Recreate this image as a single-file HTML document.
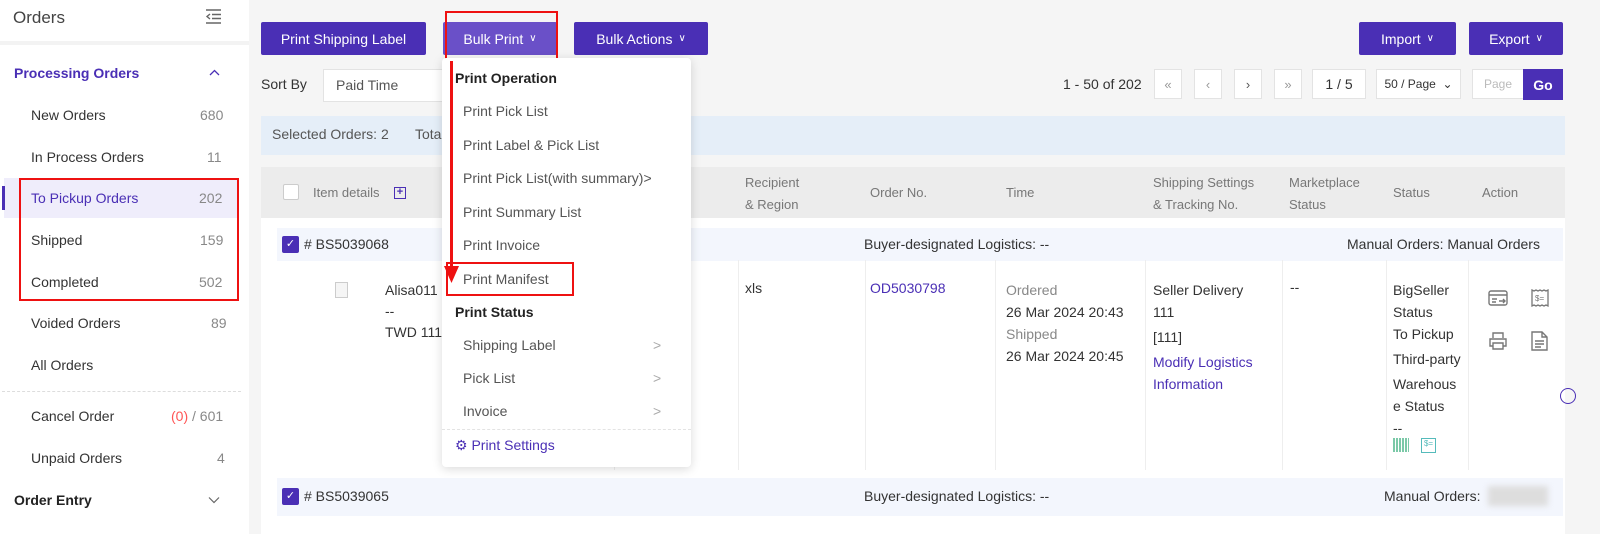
<!DOCTYPE html>
<html><head><meta charset="utf-8"><style>
*{margin:0;padding:0;box-sizing:border-box}
body{width:1600px;height:534px;overflow:hidden;background:#f5f5f5;font-family:"Liberation Sans",sans-serif;font-size:14px;color:#333;position:relative}
.a{position:absolute;white-space:nowrap}
.btn{position:absolute;height:33px;background:#4a2fb5;color:#fff;font-size:14px;display:flex;align-items:center;justify-content:center;border-radius:2px}
.pg{position:absolute;top:69px;height:30px;background:#fff;border:1px solid #e3e3e3;color:#999;display:flex;align-items:center;justify-content:center;font-size:13px}
.sb{color:#333;font-size:14px}
.n{color:#888;font-size:14px}
.mi{position:absolute;left:463px;color:#555;font-size:14px}
.vl{position:absolute;width:1px;background:#eee;top:260px;height:210px}
.hd{color:#777;font-size:13px;line-height:22px}
.chk{position:absolute;width:17px;height:17px;background:#4a2fb5;border-radius:2px;color:#fff;font-size:11px;text-align:center;line-height:17px}
</style></head><body>
<div class="a" style="left:0;top:0;width:249px;height:534px;background:#fff"></div>
<div class="a" style="left:0;top:41px;width:249px;height:4px;background:#f3f3f3"></div>
<div class="a" style="left:13px;top:8px;font-size:17px;color:#444">Orders</div>
<svg class="a" style="left:205px;top:9px" width="17" height="15" viewBox="0 0 17 15" fill="none" stroke="#666" stroke-width="1.4"><path d="M1 1h15M7 5.5h9M7 9.5h9M1 14h15M5 5l-3 2.5 3 2.5"/></svg>
<div class="a" style="left:14px;top:65px;color:#4a2fb5;font-size:14px;font-weight:bold">Processing Orders</div>
<svg class="a" style="left:209px;top:69px" width="11" height="8"><path d="M1 6l4.5-4.5L10 6" stroke="#4a2fb5" stroke-width="1.3" fill="none"/></svg>
<div class="a" style="left:4px;top:178px;width:234px;height:40px;background:#efedfb"></div>
<div class="a" style="left:2px;top:186px;width:3px;height:24px;background:#4a2fb5"></div>
<div class="a sb" style="left:31px;top:107px">New Orders</div><div class="a n" style="left:200px;top:107px">680</div>
<div class="a sb" style="left:31px;top:149px">In Process Orders</div><div class="a n" style="left:207px;top:149px">11</div>
<div class="a sb" style="left:31px;top:190px;color:#4a2fb5">To Pickup Orders</div><div class="a n" style="left:199px;top:190px">202</div>
<div class="a sb" style="left:31px;top:232px">Shipped</div><div class="a n" style="left:200px;top:232px">159</div>
<div class="a sb" style="left:31px;top:274px">Completed</div><div class="a n" style="left:199px;top:274px">502</div>
<div class="a sb" style="left:31px;top:315px">Voided Orders</div><div class="a n" style="left:211px;top:315px">89</div>
<div class="a sb" style="left:31px;top:357px">All Orders</div>
<div class="a" style="left:2px;top:391px;width:239px;border-top:1px dashed #ddd"></div>
<div class="a sb" style="left:31px;top:408px">Cancel Order</div><div class="a n" style="left:171px;top:408px"><span style="color:#f55">(0)</span> / 601</div>
<div class="a sb" style="left:31px;top:450px">Unpaid Orders</div><div class="a n" style="left:217px;top:450px">4</div>
<div class="a" style="left:14px;top:492px;font-weight:bold;color:#222">Order Entry</div>
<svg class="a" style="left:208px;top:496px" width="12" height="8"><path d="M1 1.5l5 5 5-5" stroke="#666" stroke-width="1.2" fill="none"/></svg>
<div class="a" style="left:19px;top:178px;width:220px;height:123px;border:2px solid #e11"></div>

<div class="btn" style="left:261px;top:22px;width:165px">Print Shipping Label</div>
<div class="btn" style="left:443px;top:22px;width:114px;background:#6a50c8">Bulk Print <span style="font-size:10px;margin-left:6px">&#8744;</span></div>
<div class="btn" style="left:574px;top:22px;width:134px">Bulk Actions <span style="font-size:10px;margin-left:6px">&#8744;</span></div>
<div class="btn" style="left:1359px;top:22px;width:97px">Import <span style="font-size:10px;margin-left:6px">&#8744;</span></div>
<div class="btn" style="left:1469px;top:22px;width:94px">Export <span style="font-size:10px;margin-left:6px">&#8744;</span></div>
<div class="a" style="left:445px;top:11px;width:113px;height:50px;border:2px solid #e11"></div>

<div class="a" style="left:261px;top:76px">Sort By</div>
<div class="a" style="left:323px;top:69px;width:127px;height:33px;background:#fff;border:1px solid #e3e3e3"></div>
<div class="a" style="left:336px;top:77px;color:#555">Paid Time</div>
<div class="a" style="left:1063px;top:76px">1 - 50 of 202</div>
<div class="pg" style="left:1154px;width:28px">&laquo;</div>
<div class="pg" style="left:1194px;width:28px">&lsaquo;</div>
<div class="pg" style="left:1234px;width:28px;color:#555">&rsaquo;</div>
<div class="pg" style="left:1274px;width:28px">&raquo;</div>
<div class="pg" style="left:1312px;width:54px;color:#333;font-size:14px">1 / 5</div>
<div class="pg" style="left:1376px;width:85px;color:#333;font-size:12px">50 / Page &nbsp;&#8964;</div>
<div class="pg" style="left:1472px;width:52px;color:#bbb;font-size:12px">Page</div>
<div class="a" style="left:1523px;top:69px;width:40px;height:31px;background:#4a2fb5;color:#fff;font-weight:bold;display:flex;align-items:center;justify-content:center">Go</div>

<div class="a" style="left:261px;top:116px;width:1304px;height:39px;background:#e5eef8"></div>
<div class="a" style="left:272px;top:126px;color:#555">Selected Orders: 2</div>
<div class="a" style="left:415px;top:126px;color:#555">Total</div>

<div class="a" style="left:261px;top:167px;width:1304px;height:367px;background:#fff"></div>
<div class="a" style="left:261px;top:167px;width:1304px;height:51px;background:#ececec"></div>
<div class="a" style="left:283px;top:184px;width:16px;height:16px;border:1px solid #ccc;background:#fff;border-radius:2px"></div>
<div class="a hd" style="left:313px;top:182px">Item details</div>
<div class="a" style="left:394px;top:187px;width:12px;height:12px;border:1.5px solid #4a2fb5;color:#4a2fb5;font-size:11px;line-height:9px;text-align:center;font-weight:bold">+</div>
<div class="a hd" style="left:745px;top:172px">Recipient<br>&amp; Region</div>
<div class="a hd" style="left:870px;top:182px">Order No.</div>
<div class="a hd" style="left:1006px;top:182px">Time</div>
<div class="a hd" style="left:1153px;top:172px">Shipping Settings<br>&amp; Tracking No.</div>
<div class="a hd" style="left:1289px;top:172px">Marketplace<br>Status</div>
<div class="a hd" style="left:1393px;top:182px">Status</div>
<div class="a hd" style="left:1482px;top:182px">Action</div>

<div class="a" style="left:277px;top:228px;width:1286px;height:33px;background:#f3f6fd"></div>
<div class="chk" style="left:282px;top:236px">&#10003;</div>
<div class="a" style="left:304px;top:236px">#&nbsp;BS5039068</div>
<div class="a" style="left:864px;top:236px">Buyer-designated Logistics: --</div>
<div class="a" style="left:1347px;top:236px">Manual Orders: Manual Orders</div>

<div class="vl" style="left:614px"></div><div class="vl" style="left:738px"></div><div class="vl" style="left:865px"></div><div class="vl" style="left:995px"></div><div class="vl" style="left:1145px"></div><div class="vl" style="left:1282px"></div><div class="vl" style="left:1386px"></div><div class="vl" style="left:1468px"></div>

<div class="a" style="left:335px;top:282px;width:13px;height:16px;border:1px solid #ccc;background:#f5f5f5"></div>
<div class="a" style="left:385px;top:280px;line-height:21px">Alisa011<br>--<br>TWD 111</div>
<div class="a" style="left:745px;top:280px">xls</div>
<div class="a" style="left:870px;top:280px;color:#4a2fb5">OD5030798</div>
<div class="a" style="left:1006px;top:279px;line-height:22px"><span style="color:#888">Ordered</span><br>26 Mar 2024 20:43<br><span style="color:#888">Shipped</span><br>26 Mar 2024 20:45</div>
<div class="a" style="left:1153px;top:279px;line-height:22px">Seller Delivery<br>111<br><span style="line-height:28px">[111]</span><br><span style="color:#4a2fb5">Modify Logistics<br>Information</span></div>
<div class="a" style="left:1290px;top:279px">--</div>
<div class="a" style="left:1393px;top:279px;line-height:22px">BigSeller<br>Status<br>To Pickup<br><span style="line-height:28px">Third-party</span><br>Warehous<br>e Status<br>--</div>
<div class="a" style="left:1393px;top:438px;width:16px;height:14px;background:repeating-linear-gradient(90deg,#7bc9a8 0 2px,#fff 2px 3px)"></div>
<div class="a" style="left:1421px;top:438px;width:15px;height:15px;border:1px solid #5bb;font-size:8px;color:#5bb;text-align:center">$=</div>
<svg class="a" style="left:1488px;top:289px" width="20" height="18" fill="none" stroke="#777" stroke-width="1.4"><rect x="1" y="2" width="18" height="14" rx="2"/><path d="M1 6h18M4 10h5M4 13h4M11 12h6M15 10l2 2-2 2"/></svg>
<svg class="a" style="left:1530px;top:288px" width="20" height="20" fill="none" stroke="#777" stroke-width="1.3"><path d="M2 2l2 1 2-1 2 1 2-1 2 1 2-1 2 1 2-1v16l-2-1-2 1-2-1-2 1-2-1-2 1-2-1-2 1z"/><text x="5" y="13" font-size="8" fill="#777" stroke="none">$=</text></svg>
<svg class="a" style="left:1488px;top:331px" width="20" height="20" fill="none" stroke="#777" stroke-width="1.4"><path d="M5 7V2h10v5M5 15H2V8h16v7h-3M5 12h10v6H5z"/></svg>
<svg class="a" style="left:1531px;top:331px" width="17" height="20" fill="none" stroke="#777" stroke-width="1.4"><path d="M1 1h10l5 5v13H1zM11 1v5h5M4 10h9M4 13h9M4 16h6"/></svg>
<div class="a" style="left:1560px;top:388px;width:16px;height:16px;border:1.5px solid #4a2fb5;border-radius:50%"></div>

<div class="a" style="left:277px;top:478px;width:1286px;height:38px;background:#f3f6fd"></div>
<div class="chk" style="left:282px;top:488px">&#10003;</div>
<div class="a" style="left:304px;top:488px">#&nbsp;BS5039065</div>
<div class="a" style="left:864px;top:488px">Buyer-designated Logistics: --</div>
<div class="a" style="left:1384px;top:488px">Manual Orders:</div>
<div class="a" style="left:1488px;top:486px;width:60px;height:20px;background:#ddd;filter:blur(3px)"></div>

<div class="a" style="left:442px;top:58px;width:249px;height:409px;background:#fff;border-radius:4px;box-shadow:0 2px 10px rgba(0,0,0,.15)"></div>
<div class="a" style="left:455px;top:70px;font-weight:bold;color:#222">Print Operation</div>
<div class="mi" style="top:103px">Print Pick List</div>
<div class="mi" style="top:137px">Print Label &amp; Pick List</div>
<div class="mi" style="top:170px">Print Pick List(with summary)&gt;</div>
<div class="mi" style="top:204px">Print Summary List</div>
<div class="mi" style="top:237px">Print Invoice</div>
<div class="mi" style="top:271px">Print Manifest</div>
<div class="a" style="left:455px;top:304px;font-weight:bold;color:#222">Print Status</div>
<div class="mi" style="top:337px">Shipping Label</div><div class="a" style="left:653px;top:337px;color:#aaa">&gt;</div>
<div class="mi" style="top:370px">Pick List</div><div class="a" style="left:653px;top:370px;color:#aaa">&gt;</div>
<div class="mi" style="top:403px">Invoice</div><div class="a" style="left:653px;top:403px;color:#aaa">&gt;</div>
<div class="a" style="left:442px;top:429px;width:249px;border-top:1px dashed #e3e3e3"></div>
<div class="a" style="left:455px;top:437px;color:#4a2fb5">&#9881; Print Settings</div>
<div class="a" style="left:446px;top:262px;width:128px;height:34px;border:2px solid #e11"></div>
<div class="a" style="left:450px;top:61px;width:3px;height:210px;background:#e11"></div>
<svg class="a" style="left:444px;top:266px" width="15" height="17"><path d="M0 0h15L7.5 17z" fill="#e11"/></svg>
</body></html>
